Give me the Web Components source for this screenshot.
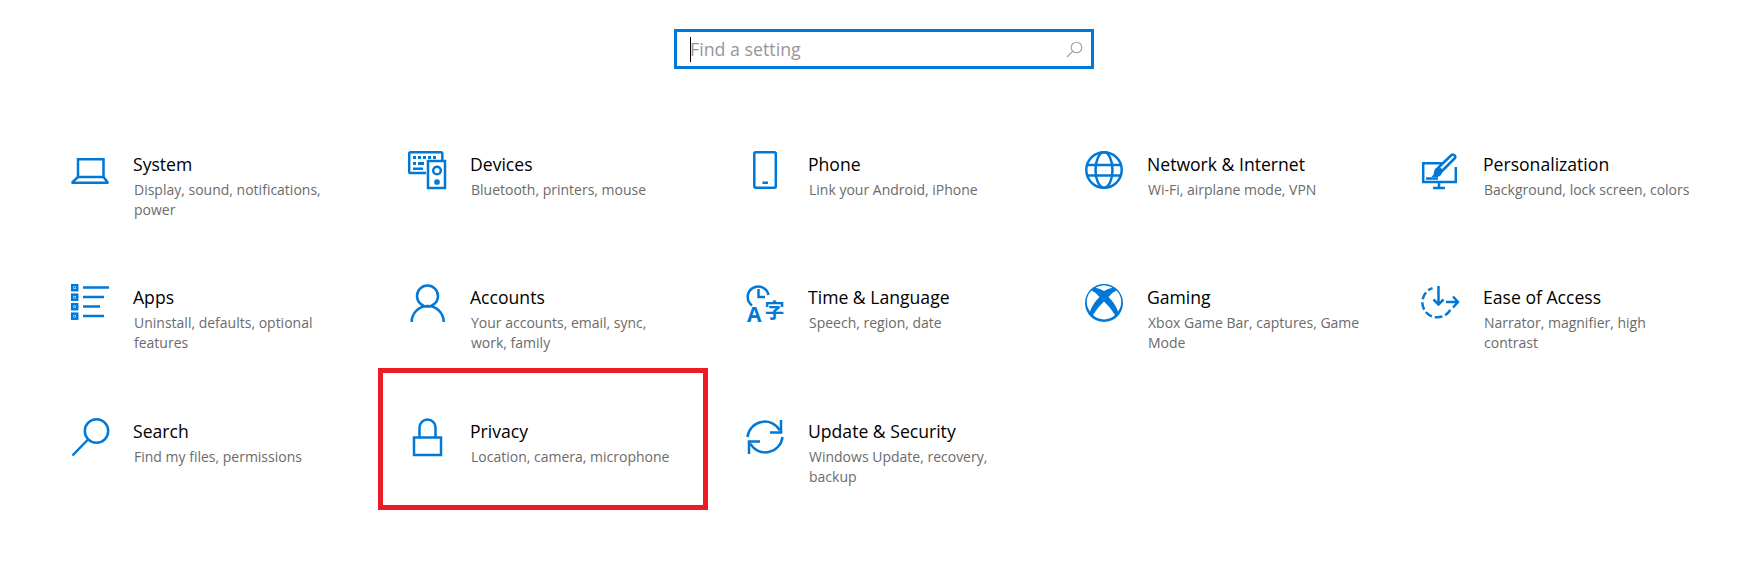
<!DOCTYPE html>
<html>
<head>
<meta charset="utf-8">
<title>Settings</title>
<style>
  html, body { margin: 0; background: #fff; }
  body { font-family: "Open Sans", "Liberation Sans", sans-serif; width: 1754px; height: 581px; overflow: hidden; }
  svg { display: block; overflow: visible; }
  svg .s { fill: none; stroke: #0078d7; stroke-width: 2.5; }
  svg .f { fill: #0078d7; }
  svg .w { fill: #fff; }
</style>
</head>
<body>
<settings-page>
  <settings-search slot="search" placeholder="Find a setting"></settings-search>

  <settings-tile heading="System" sub="Display, sound, notifications, power">
    <svg slot="icon" width="38" height="38" viewBox="0 0 38 38"><path class="s" d="M7 27V8.200h25.500V27"/><path class="s" stroke-linejoin="round" d="M7 26 1.500 31.200v.6H36.500v-.6L32.500 26Z"/></svg>
  </settings-tile>
  <settings-tile heading="Devices" sub="Bluetooth, printers, mouse">
    <svg slot="icon" width="38" height="38" viewBox="0 0 38 38"><path class="s" d="M18 22H2.500a1.300 1.300 0 0 1-1.300-1.300V2.500A1.300 1.300 0 0 1 2.500 1.200H33a1.300 1.300 0 0 1 1.300 1.300V9"/><rect class="s" x="20" y="10" width="17" height="27"/><circle class="s" cx="29" cy="19.500" r="3.800"/><circle class="s" cx="29" cy="31" r="1.600" stroke-width="2"/><path class="f" d="M5 5h3v3H5zM10 5h3v3h-3zM15 5h3v3h-3zM20 5h3v3h-3zM25 5h3v3h-3zM5 11h3v3H5zM10 11h6v3h-6zM5 16.500h10v2.500H5z"/></svg>
  </settings-tile>
  <settings-tile heading="Phone" sub="Link your Android, iPhone">
    <svg slot="icon" width="38" height="38" viewBox="0 0 38 38"><rect class="s" x="8.300" y="1.300" width="21.500" height="35.500" rx="1.500"/><rect class="f" x="16.500" y="30.500" width="5.500" height="2.500"/></svg>
  </settings-tile>
  <settings-tile heading="Network &amp; Internet" sub="Wi-Fi, airplane mode, VPN">
    <svg slot="icon" width="38" height="38" viewBox="0 0 38 38"><circle class="s" cx="19" cy="19" r="17.700"/><ellipse class="s" cx="19" cy="19" rx="8.500" ry="17.700"/><path class="s" d="M3 14h32M3 24.500h32"/></svg>
  </settings-tile>
  <settings-tile heading="Personalization" sub="Background, lock screen, colors">
    <svg slot="icon" width="38" height="38" viewBox="0 0 38 38"><path class="s" d="M21 12.300H2.200V31H34.800V16"/><path class="s" d="M12 37h12M18 31v5"/><path class="s" stroke-width="2.200" stroke-linejoin="round" d="M34 7 21 20l-3.500-3.500L30.500 4c1.800-1.500 4.800 1 3.500 3Z"/><path class="f" d="M17 16l4.500 4.500c-.5 3-2.500 5-5 5.500H10.500c1.500-1.500 2.500-3 2.500-5 .3-2.600 1.700-4.300 4-5Z"/><path class="s" d="M5 27.500h12"/></svg>
  </settings-tile>

  <settings-tile heading="Apps" sub="Uninstall, defaults, optional features">
    <svg slot="icon" width="38" height="38" viewBox="0 0 38 38"><rect class="s" x="1.200" y="1.200" width="5" height="5"/><rect class="s" x="1.200" y="10.700" width="5" height="5"/><rect class="s" x="1.200" y="20.200" width="5" height="5"/><rect class="s" x="1.200" y="29.700" width="5" height="5"/><path class="s" d="M12 3.500h26M12 13h21M12 22.500h17M12 32h21"/><rect class="f" x="3" y="3" width="1.500" height="1.500"/><rect class="f" x="3" y="12.500" width="1.500" height="1.500"/><rect class="f" x="3" y="22" width="1.500" height="1.500"/><rect class="f" x="3" y="31.500" width="1.500" height="1.500"/></svg>
  </settings-tile>
  <settings-tile heading="Accounts" sub="Your accounts, email, sync, work, family">
    <svg slot="icon" width="38" height="38" viewBox="0 0 38 38"><circle class="s" cx="19.500" cy="12" r="10.500"/><path class="s" d="M3.700 38A16 16 0 0 1 35.700 38"/></svg>
  </settings-tile>
  <settings-tile heading="Time &amp; Language" sub="Speech, region, date">
    <svg slot="icon" width="38" height="38" viewBox="0 0 38 38"><path class="s" d="M6 21.500A10.500 10.500 0 1 1 22.500 11"/><path class="s" d="M12.500 5v8h6.500"/><text class="f" x="1" y="38" font-family="'Open Sans', sans-serif" font-size="21" font-weight="700">A</text><text class="f" x="18.500" y="34" font-family="'Noto Sans CJK SC', sans-serif" font-size="20" font-weight="700">字</text></svg>
  </settings-tile>
  <settings-tile heading="Gaming" sub="Xbox Game Bar, captures, Game Mode">
    <svg slot="icon" width="38" height="38" viewBox="0 0 38 38"><circle class="f" cx="19" cy="19" r="19"/><path class="w" d="M10.500 3.800A16 16 0 0 1 27.500 3.800Q23 4.500 19 7 15 4.500 10.500 3.800Z"/><path class="w" d="M6.500 6.500Q10.500 8 14.500 13 7.500 20 5 27.500A16 16 0 0 1 6.500 6.500Z"/><path class="w" d="M31.500 6.500Q27.500 8 23.500 13 30.500 20 33 27.500A16 16 0 0 0 31.500 6.500Z"/><path class="w" d="M8 31Q12 24 19 17.500 26 24 30 31A16 16 0 0 1 8 31Z"/></svg>
  </settings-tile>
  <settings-tile heading="Ease of Access" sub="Narrator, magnifier, high contrast">
    <svg slot="icon" width="38" height="38" viewBox="0 0 38 38"><path class="s" stroke-dasharray="7.500 3" d="M29.300 25.800A15 15 0 1 1 11.500 4.100"/><path class="s" d="M17.500 2v18M12.500 15.500l5 5 5-5"/><path class="s" d="M25 18h12M32 12.500l5 5.500-5 5.500"/></svg>
  </settings-tile>

  <settings-tile heading="Search" sub="Find my files, permissions">
    <svg slot="icon" width="38" height="38" viewBox="0 0 38 38"><circle class="s" cx="25.500" cy="13" r="11.700"/><path class="s" d="M17 21.500 1.500 37.500"/></svg>
  </settings-tile>
  <settings-tile heading="Privacy" sub="Location, camera, microphone" highlighted>
    <svg slot="icon" width="38" height="38" viewBox="0 0 38 38"><path class="s" d="M11.500 19V9.500a8 8 0 0 1 16 0V19"/><rect class="s" x="6" y="19.500" width="27" height="17.500"/></svg>
  </settings-tile>
  <settings-tile heading="Update &amp; Security" sub="Windows Update, recovery, backup">
    <svg slot="icon" width="38" height="38" viewBox="0 0 38 38"><path class="s" d="M1.500 19A17.300 17.300 0 0 1 33.800 12.500"/><path class="s" d="M35 2v12.500H24"/><path class="s" d="M36.500 19A17.300 17.300 0 0 1 4.200 25.500"/><path class="s" d="M3 36V23.500H14"/></svg>
  </settings-tile>
</settings-page>

<script>
class SettingsPage extends HTMLElement {
  constructor() {
    super();
    this.attachShadow({ mode: 'open' });
    this.shadowRoot.innerHTML = `
      <style>
        :host { display: block; }
        .top { padding: 29px 0 0 674px; }
        .grid {
          display: grid;
          grid-template-columns: 337px 338px 339px 336px 1fr;
          grid-template-rows: 133px 134px 133px;
          margin: 82px 0 0 71px;
        }
      </style>
      <div class="top"><slot name="search"></slot></div>
      <div class="grid"><slot></slot></div>
    `;
  }
}

class SettingsSearch extends HTMLElement {
  constructor() {
    super();
    this.attachShadow({ mode: 'open' });
  }

  connectedCallback() {
    this.shadowRoot.innerHTML = `
      <style>
        :host {
          display: flex;
          align-items: center;
          box-sizing: border-box;
          width: 420px;
          height: 40px;
          padding: 0 8px 0 13px;
          border: 3px solid #0078d7;
          background: #fff;
        }
        .caret { width: 1px; height: 25px; background: #000; flex: none; margin-right: -1px; }
        .text { flex: 1; color: #969696; font-size: 17.8px; line-height: 25px; white-space: nowrap; }
        svg { display: block; flex: none; }
      </style>
      <span class="caret"></span>
      <span class="text">${this.getAttribute('placeholder')}</span>
      <svg width="17" height="17" viewBox="0 0 17 17">
        <circle cx="10.500" cy="6.500" r="5.300" fill="none" stroke="#a0a0a0" stroke-width="1.100"/>
        <path d="M6.500 10.500 1 16" fill="none" stroke="#a0a0a0" stroke-width="1.100"/>
      </svg>
    `;
  }
}

class SettingsTile extends HTMLElement {
  constructor() {
    super();
    this.attachShadow({ mode: 'open' });
  }

  connectedCallback() {
    this.shadowRoot.innerHTML = `
      <style>
        :host {
          display: flex;
          align-items: flex-start;
          gap: 24px;
          position: relative;
          font-family: "Open Sans", "Liberation Sans", sans-serif;
        }
        :host([highlighted])::after {
          content: "";
          position: absolute;
          left: -30px;
          top: -50px;
          width: 330px;
          height: 142px;
          box-sizing: border-box;
          border: 5px solid #ed1c24;
          pointer-events: none;
        }
        .icon { width: 38px; height: 38px; flex: none; }
        .text { width: 213px; padding-top: 1px; }
        .heading { color: #000; font-size: 17.6px; line-height: 24px; }
        .sub { color: #6b6b6b; font-size: 14px; line-height: 20px; margin: 4px 0 0 1px; }
      </style>
      <div class="icon"><slot name="icon"></slot></div>
      <div class="text">
        <div class="heading"></div>
        <div class="sub"></div>
      </div>
    `;
    this.shadowRoot.querySelector('.heading').textContent = this.getAttribute('heading');
    this.shadowRoot.querySelector('.sub').textContent = this.getAttribute('sub');
  }
}

customElements.define('settings-page', SettingsPage);
customElements.define('settings-search', SettingsSearch);
customElements.define('settings-tile', SettingsTile);
</script>
</body>
</html>
